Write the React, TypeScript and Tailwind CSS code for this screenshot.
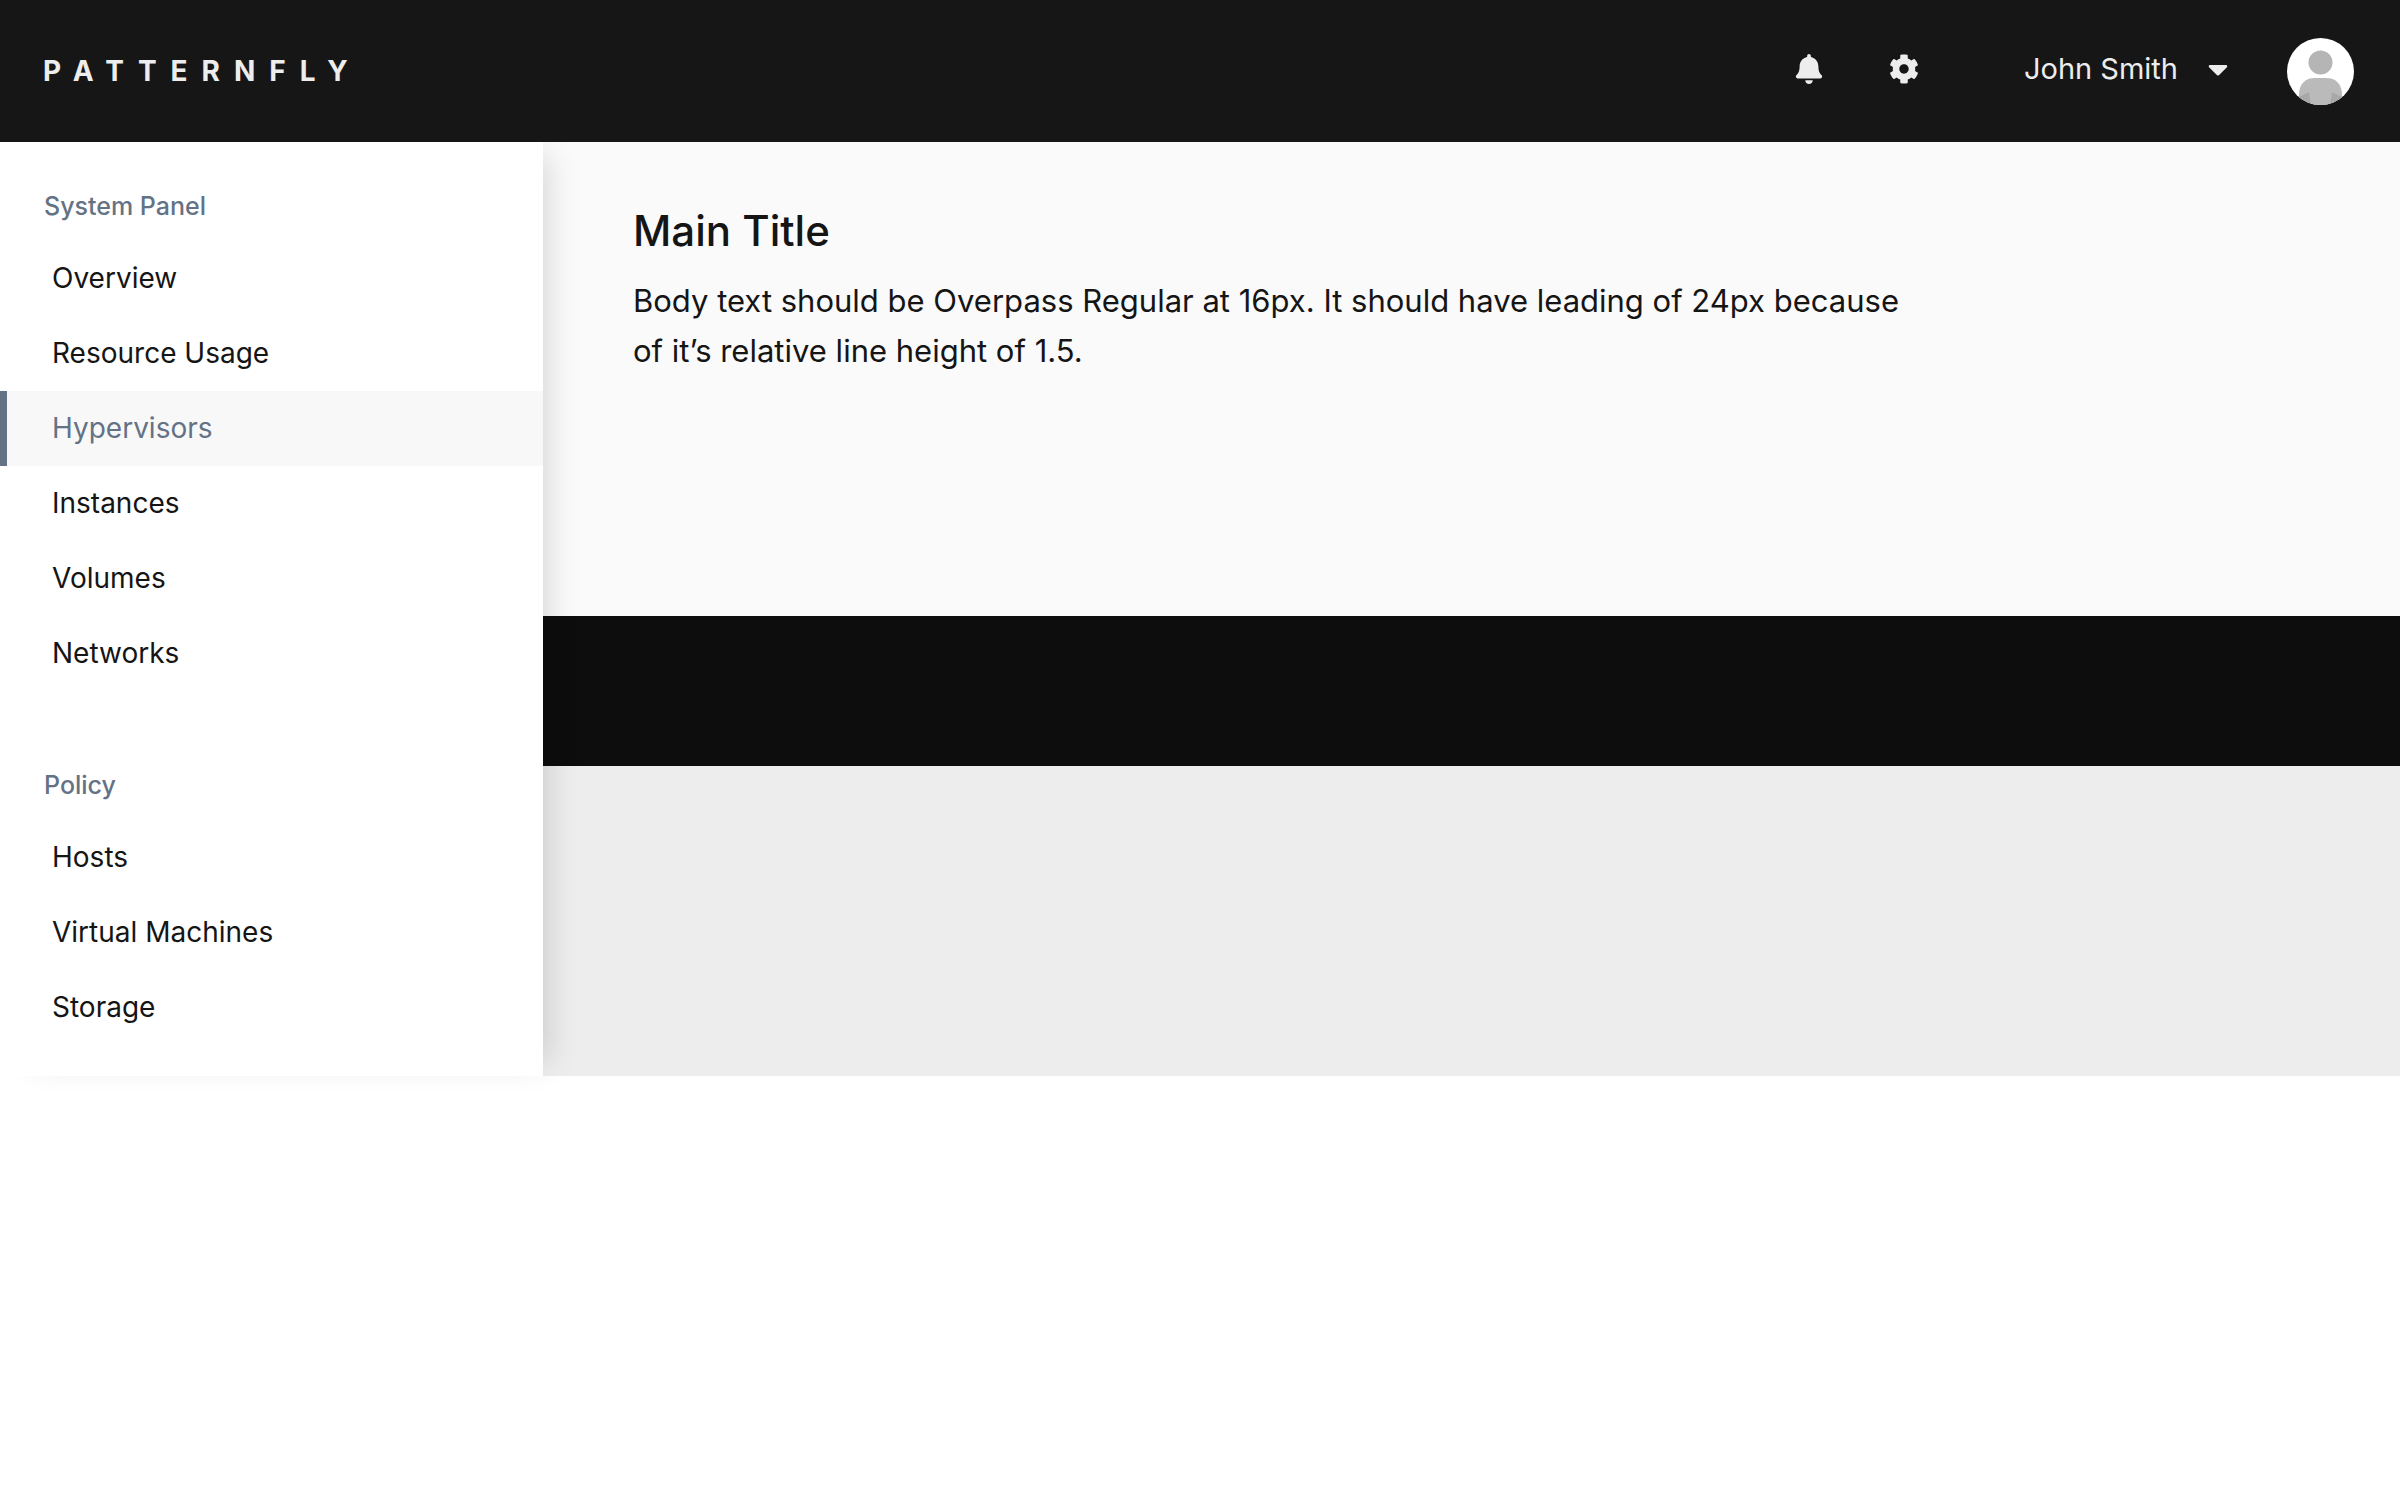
import { FaBell, FaCaretDown, FaCog } from "react-icons/fa";

type NavSection = { id: string; title: string; items: string[] };

const sections: NavSection[] = [
  {
    id: "system-panel",
    title: "System Panel",
    items: ["Overview", "Resource Usage", "Hypervisors", "Instances", "Volumes", "Networks"],
  },
  { id: "policy", title: "Policy", items: ["Hosts", "Virtual Machines", "Storage"] },
];

const current = "Hypervisors";

function Avatar() {
  return (
    <svg viewBox="0 0 67 67" className="size-[67px]" role="img" aria-label="User avatar">
      <defs>
        <clipPath id="avatar-circle">
          <circle cx="33.5" cy="33.5" r="33.5" />
        </clipPath>
      </defs>
      <g clipPath="url(#avatar-circle)">
        <rect width="67" height="67" fill="#ffffff" />
        <circle cx="33.5" cy="24.5" r="12" fill="#b5b5b5" />
        <path
          d="M12 67V57C12 46 18 40 28 40H39C49 40 55 46 55 57V67Z"
          fill="#bababa"
        />
        <path d="M12 67V59L22 54L24 67Z" fill="#a8a8a8" />
        <path d="M55 67V59L45 54L43 67Z" fill="#a8a8a8" />
      </g>
    </svg>
  );
}

function Header() {
  return (
    <header className="relative z-20 flex h-[142px] items-center justify-between bg-[#161616] pr-[46px] pl-[43px] text-[#ededed]">
      <a href="#" className="text-[28px] leading-none font-bold tracking-[0.5em]">
        PATTERNFLY
      </a>
      <div className="flex items-center">
        <div className="flex items-center pb-1">
          <button type="button" aria-label="Notifications" className="mr-[65px]">
            <FaBell className="size-[30px]" />
          </button>
          <button type="button" aria-label="Settings" className="mr-[105px]">
            <FaCog className="size-[30px]" />
          </button>
          <button type="button" className="mr-[53px] flex items-center gap-6 text-[29px]">
            John Smith
            <FaCaretDown className="size-8" />
          </button>
        </div>
        <Avatar />
      </div>
    </header>
  );
}

function NavGroup({ section }: { section: NavSection }) {
  return (
    <section aria-labelledby={section.id}>
      <h2
        id={section.id}
        className="mb-[15px] pl-11 text-[25px] leading-[40px] font-medium text-[#647285]"
      >
        {section.title}
      </h2>
      <ul>
        {section.items.map((item) => (
          <li key={item}>
            <a
              href="#"
              aria-current={item === current ? "page" : undefined}
              className={
                item === current
                  ? "block border-l-[7px] border-[#647285] bg-[#f8f8f8] pl-[45px] text-[28px] leading-[75px] text-[#647285]"
                  : "block border-l-[7px] border-transparent pl-[45px] text-[28px] leading-[75px]"
              }
            >
              {item}
            </a>
          </li>
        ))}
      </ul>
    </section>
  );
}

export default function App() {
  return (
    <div className="bg-white pb-16 font-['Inter',sans-serif] text-[#151515]">
      <Header />
      <div className="flex">
        <nav
          aria-label="Main"
          className="relative z-10 flex w-[543px] shrink-0 flex-col gap-[74px] bg-white pt-11 pb-[31px] shadow-[18px_0_30px_-14px_rgba(0,0,0,0.15)]"
        >
          {sections.map((section) => (
            <NavGroup key={section.id} section={section} />
          ))}
        </nav>
        <main className="flex min-w-0 flex-1 flex-col">
          <section className="bg-[#fafafa] px-[90px] pt-16 pb-60">
            <h1 className="mb-5 text-[42px] leading-[50px] font-medium">Main Title</h1>
            <p className="max-w-[1300px] text-[31px] leading-[50px]">
              Body text should be Overpass Regular at 16px. It should have leading of 24px because
              of it’s relative line height of 1.5.
            </p>
          </section>
          <section className="h-[150px] bg-[#0d0d0d]" />
          <section className="flex-1 bg-[#ededed]" />
        </main>
      </div>
    </div>
  );
}
